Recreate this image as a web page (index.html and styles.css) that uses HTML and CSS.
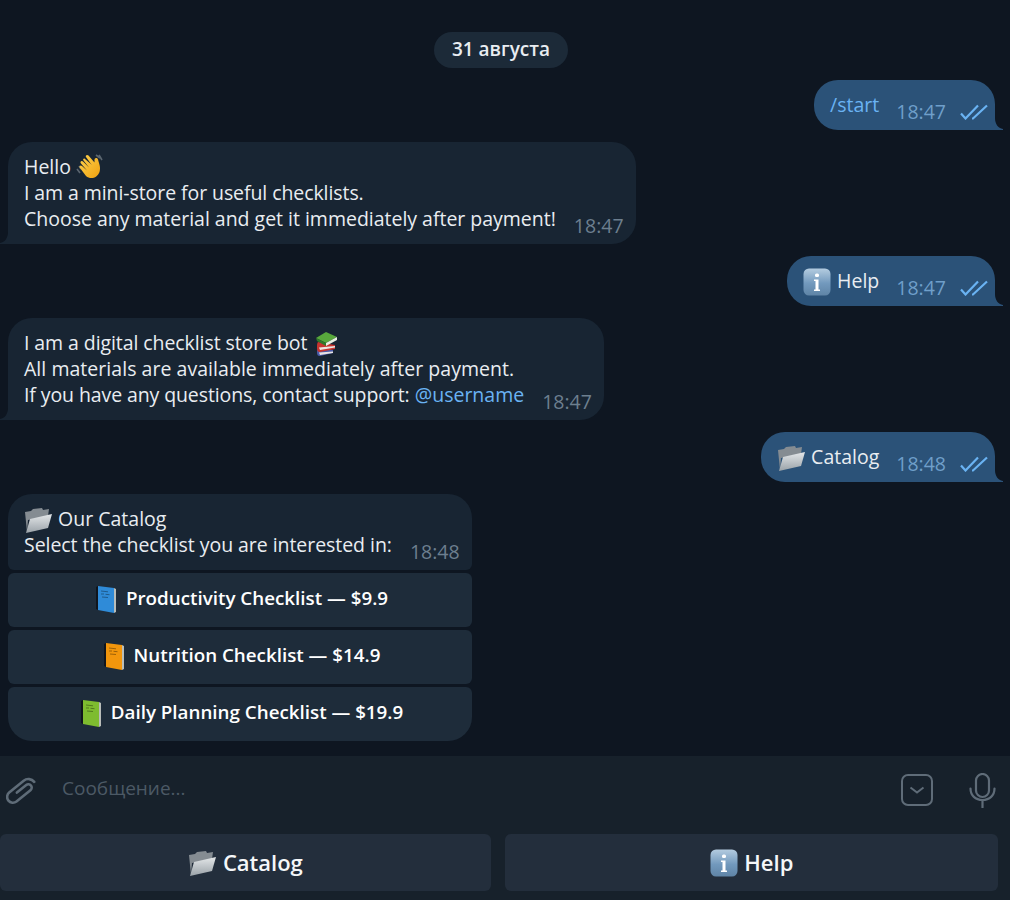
FILE: index.html
```html
<!DOCTYPE html>
<html lang="ru">
<head>
    <meta charset="UTF-8">
    <meta name="viewport" content="width=device-width, initial-scale=1.0">
    <title>Checklist store bot</title>
    <link rel="stylesheet" href="styles.css">
</head>
<body>
    <!-- Emoji and check marks, reused below -->
    <svg class="defs" width="0" height="0" aria-hidden="true">
        <defs>
            <linearGradient id="infoFill" x1="0" y1="0" x2="0" y2="1">
                <stop offset="0" stop-color="#b4cce0"/>
                <stop offset="0.55" stop-color="#7299bd"/>
                <stop offset="1" stop-color="#5f84a6"/>
            </linearGradient>
            <linearGradient id="folderFill" x1="0" y1="0" x2="0" y2="1">
                <stop offset="0" stop-color="#e4e7e9"/>
                <stop offset="1" stop-color="#9aa2a8"/>
            </linearGradient>
            <linearGradient id="waveFill" x1="0" y1="0" x2="1" y2="1">
                <stop offset="0" stop-color="#ffd34d"/>
                <stop offset="1" stop-color="#eea010"/>
            </linearGradient>
        </defs>
        <symbol id="e-wave" viewBox="0 0 28 28">
            <path d="M1 15l3 4M3 12l2 3M20 1l4 3M23 1l3 5" stroke="#5b6670" stroke-width="1.600" fill="none"/>
            <path d="M9 5l7 6-1-1-5-7c-1-1.500 1-3 2.500-1.500l6 7 0-3c.5-2 3-2 3.500 0 1 4 3 8 1.500 12.500-2 6-9 8-13.500 4L4 14c-1.500-1.500.5-3.500 2-2l5 4.500-6-7C3.500 8 5.500 6 7 7.500l6 6-5.500-7C6.500 5 8 3.800 9 5z" fill="url(#waveFill)"/>
        </symbol>
        <symbol id="e-books" viewBox="-3 0 28 24">
            <path d="M3 17l15 1v3L5 24c-2 .2-3-1-3-3.500C2 19 2 18 3 17z" fill="#4a5aa8"/>
            <path d="M4 20.500l14-1v1.500L5 23z" fill="#e7e3e3"/>
            <path d="M3 10l17 3v4L5 20c-2 0-3-1-3-3.500C2 13 2 11 3 10z" fill="#c8342f"/>
            <path d="M4 15.500l16-1.500v1.500L5 18z" fill="#ece7e2"/>
            <path d="M1 6l10-6 11 5-11 6z" fill="#58a83c"/>
            <path d="M11 11l11-6v3L11 14z" fill="#e8efe2"/>
            <path d="M1 6l10 5v3L2 9z" fill="#2f7a2a"/>
        </symbol>
        <symbol id="e-info" viewBox="0 0 28 28">
            <rect x="0.500" y="0.500" width="27" height="27" rx="5.500" fill="url(#infoFill)"/>
            <rect x="12" y="5.500" width="4" height="3.500" rx="1.500" fill="#fff"/>
            <path d="M11 11.500h4.500v10H17V23h-6v-1.500h1.500v-8.500H11z" fill="#fff"/>
        </symbol>
        <symbol id="e-folder" viewBox="0 0 28 28">
            <path d="M1 6l6-1 2-2 9-1 1 2 6-1-1 7L4 14 3 26z" fill="#858c92"/>
            <path d="M2 27l4-14 22-5-4 14z" fill="url(#folderFill)"/>
        </symbol>
        <symbol id="e-book" viewBox="0 0 28 28">
            <path d="M6 1l16 2v25L6 25z" fill="currentColor"/>
            <path d="M22 3l2 1v23l-2 1z" fill="#b9bdb9"/>
            <path d="M4 2l2-1v24l-2-1z" fill="#10151c"/>
            <path d="M9 6l7 .8M9 9h3M13.500 9.300l4 .4M10 12l6 .5" stroke="#000" stroke-opacity="0.350" stroke-width="1" fill="none"/>
        </symbol>
        <symbol id="i-checks" viewBox="0 0 28 16">
            <path d="M1 9.500l4.500 5L18 1.500M12 14.500l1 0L27 1.500" fill="none" stroke="currentColor" stroke-width="2.200"/>
        </symbol>
    </svg>

    <div class="app">
        <main class="chat">
            <div class="date"><span class="date-pill">31 августа</span></div>

            <div class="row row-out">
                <div class="bubble bubble-out">
                    <p class="text link">/start</p>
                    <span class="time">18:47</span>
                    <svg class="checks"><use href="#i-checks"/></svg>
                    <svg class="tail" viewBox="0 0 8 12"><path d="M0 0c0 6 3 10 8 11 .5.500 0 1 0 1H0z"/></svg>
                </div>
            </div>

            <div class="row">
                <div class="bubble bubble-in">
                    <p class="text">Hello <svg class="emoji"><use href="#e-wave"/></svg><br><span class="tight">I am a mini-store for useful checklists.</span><br><span class="fit-long">Choose any material and get it immediately after payment!</span></p>
                    <span class="time">18:47</span>
                    <svg class="tail" viewBox="0 0 8 12"><path d="M8 0c0 6-3 10-8 11-.5.500 0 1 0 1h8z"/></svg>
                </div>
            </div>

            <div class="row row-out">
                <div class="bubble bubble-out">
                    <p class="text"><svg class="emoji"><use href="#e-info"/></svg> Help</p>
                    <span class="time">18:47</span>
                    <svg class="checks"><use href="#i-checks"/></svg>
                    <svg class="tail" viewBox="0 0 8 12"><path d="M0 0c0 6 3 10 8 11 .5.500 0 1 0 1H0z"/></svg>
                </div>
            </div>

            <div class="row">
                <div class="bubble bubble-in">
                    <p class="text"><span class="tight">I am a digital checklist store bot</span> <svg class="emoji"><use href="#e-books"/></svg><br><span class="wide">All materials are available immediately after payment.</span><br><span class="tighter">If you have any questions, contact support:</span> <a class="link" href="#">@username</a></p>
                    <span class="time">18:47</span>
                    <svg class="tail" viewBox="0 0 8 12"><path d="M8 0c0 6-3 10-8 11-.5.500 0 1 0 1h8z"/></svg>
                </div>
            </div>

            <div class="row row-out">
                <div class="bubble bubble-out">
                    <p class="text"><svg class="emoji"><use href="#e-folder"/></svg> Catalog</p>
                    <span class="time">18:48</span>
                    <svg class="checks"><use href="#i-checks"/></svg>
                    <svg class="tail" viewBox="0 0 8 12"><path d="M0 0c0 6 3 10 8 11 .5.500 0 1 0 1H0z"/></svg>
                </div>
            </div>

            <div class="row">
                <div class="catalog">
                    <div class="bubble bubble-in bubble-menu">
                        <p class="text"><svg class="emoji"><use href="#e-folder"/></svg> Our Catalog<br><span class="snug">Select the checklist you are interested in:</span></p>
                        <span class="time">18:48</span>
                    </div>
                    <button class="inline-btn" type="button"><svg class="emoji book-blue"><use href="#e-book"/></svg> Productivity Checklist — $9.9</button>
                    <button class="inline-btn" type="button"><svg class="emoji book-orange"><use href="#e-book"/></svg> Nutrition Checklist — $14.9</button>
                    <button class="inline-btn inline-btn-last" type="button"><svg class="emoji book-green"><use href="#e-book"/></svg> Daily Planning Checklist — $19.9</button>
                </div>
            </div>
        </main>

        <footer class="composer">
            <div class="input-row">
                <svg class="tool tool-clip" viewBox="0 0 30 31" fill="none">
                    <path d="M11 16l8.500-8.500a3.300 3.300 0 0 1 4.700 4.700L11.500 25a5.800 5.800 0 0 1-8.200-8.200L16.500 3.500a7.500 7.500 0 0 1 10.600 0" stroke="currentColor" stroke-width="2.600" stroke-linecap="round" transform="rotate(6 15 15)"/>
                </svg>
                <span class="placeholder">Сообщение...</span>
                <svg class="tool tool-keys" viewBox="0 0 32 32" fill="none">
                    <rect x="1" y="1" width="30" height="30" rx="6" stroke="currentColor" stroke-width="2"/>
                    <path d="M9.500 13.500l6.500 5 6.500-5" stroke="currentColor" stroke-width="2"/>
                </svg>
                <svg class="tool tool-mic" viewBox="0 0 27 35" fill="none">
                    <rect x="7" y="1" width="13" height="23" rx="6.500" stroke="currentColor" stroke-width="2.200"/>
                    <path d="M1.500 15.500c0 7 5 11.500 12 11.500s12-4.500 12-11.500M13.500 27v7.500" stroke="currentColor" stroke-width="2.200" stroke-linecap="round"/>
                </svg>
            </div>
            <div class="keys">
                <button class="key" type="button"><svg class="emoji"><use href="#e-folder"/></svg> Catalog</button>
                <button class="key" type="button"><svg class="emoji"><use href="#e-info"/></svg> Help</button>
            </div>
        </footer>
    </div>
</body>
</html>
```

FILE: styles.css
```css
* {
    box-sizing: border-box;
}
body {
    margin: 0;
    font-family: "Open Sans", "Noto Sans", sans-serif;
    font-size: 19.5px;
    line-height: 26px;
    color: #e9edf1;
    background: #0e1621;
}
.defs {
    position: absolute;
}
.app {
    display: flex;
    flex-direction: column;
    height: 900px;
    overflow: hidden;
}
.chat {
    flex: 1;
    display: flex;
    flex-direction: column;
    gap: 12px;
    padding: 32px 0 0;
}
.date {
    display: flex;
    justify-content: center;
    padding-right: 8px;
}
.date-pill {
    height: 36px;
    padding: 4px 18px;
    border-radius: 18px;
    background: #1c2a38;
    font-weight: 600;
    font-size: 19px;
}
.row {
    display: flex;
    padding: 0 15px 0 8px;
}
.row-out {
    justify-content: flex-end;
}
.bubble {
    position: relative;
    display: flex;
    gap: 18px;
    padding: 12px 12.5px 12px 16px;
    border-radius: 24px;
}
.bubble-in {
    background: #182533;
    border-bottom-left-radius: 0;
}
.bubble-out {
    background: #2b5278;
    border-bottom-right-radius: 0;
    padding-right: 7px;
}
.bubble-menu {
    border-radius: 24px 24px 6px 6px;
}
.text {
    margin: 0;
    white-space: nowrap;
}
/* Small per-line corrections for the width of the text */
.tighter {
    letter-spacing: -0.1px;
}
.tight {
    letter-spacing: -0.08px;
}
.snug {
    letter-spacing: -0.05px;
}
.fit-long {
    letter-spacing: -0.015px;
}
.wide {
    letter-spacing: 0.04px;
}
.link {
    color: #6ab3f3;
    text-decoration: none;
}
.time {
    align-self: flex-end;
    margin-bottom: -7px;
    color: #6d7f8f;
}
.bubble-out .time {
    margin: 0 1px -7px -1px;
    color: #6f9fca;
}
.checks {
    align-self: flex-end;
    width: 28px;
    height: 16px;
    margin: 0 0 -2px -5px;
    color: #6ab3f3;
}
.tail {
    position: absolute;
    bottom: 0;
    width: 8px;
    height: 12px;
}
.bubble-out .tail {
    left: 100%;
    fill: #2b5278;
}
.bubble-in .tail {
    right: 100%;
    fill: #182533;
}
.emoji {
    width: 28px;
    height: 28px;
    margin: -4px 1px -4px 0;
    vertical-align: -4px;
}
.book-blue {
    color: #2f8bd8;
}
.book-orange {
    color: #f2960c;
}
.book-green {
    color: #7ebc2f;
}
.catalog {
    display: flex;
    flex-direction: column;
    gap: 3px;
}
.inline-btn {
    height: 54px;
    padding: 0 0 4px;
    border: 0;
    border-radius: 6px;
    background: #1e2c3a;
    color: #fff;
    font: 600 18.8px/26px "Open Sans", "Noto Sans", sans-serif;
}
.inline-btn-last {
    border-radius: 6px 6px 24px 24px;
}
.composer {
    height: 144px;
    background: #17212b;
}
.input-row {
    display: flex;
    align-items: center;
    height: 78px;
    padding-bottom: 10px;
    color: #5f6c78;
}
.tool {
    flex: none;
}
.tool-clip {
    width: 30px;
    height: 31px;
    margin: 4px 0 0 6px;
}
.placeholder {
    flex: 1;
    margin: 0 0 4px 26px;
    color: #4c5965;
    font-size: 19px;
}
.tool-keys {
    width: 32px;
    height: 32px;
}
.tool-mic {
    width: 27px;
    height: 35px;
    margin: 0 14px 0 36px;
}
.keys {
    display: grid;
    grid-template-columns: 491px 1fr;
    gap: 14px;
    padding-right: 12px;
}
.key {
    height: 57px;
    padding: 0 0 2px;
    border: 0;
    border-radius: 6px;
    background: #232e3c;
    color: #f5f7f9;
    font: 600 22px/26px "Open Sans", "Noto Sans", sans-serif;
}
.key .emoji {
    vertical-align: -2px;
}
```
